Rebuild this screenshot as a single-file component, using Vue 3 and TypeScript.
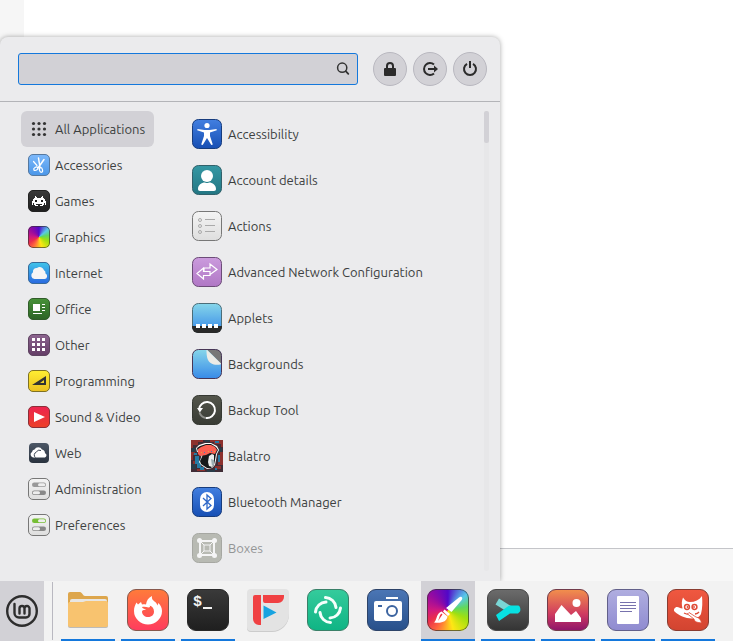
<script setup lang="ts">
import { ref } from 'vue'

interface Entry {
  label: string
  icon: string
  dim?: boolean
}

interface Task {
  label: string
  icon: string
  running: boolean
}

const categories: Entry[] = [
  { label: 'All Applications', icon: 'all' },
  { label: 'Accessories', icon: 'accessories' },
  { label: 'Games', icon: 'games' },
  { label: 'Graphics', icon: 'graphics' },
  { label: 'Internet', icon: 'internet' },
  { label: 'Office', icon: 'office' },
  { label: 'Other', icon: 'other' },
  { label: 'Programming', icon: 'programming' },
  { label: 'Sound & Video', icon: 'video' },
  { label: 'Web', icon: 'web' },
  { label: 'Administration', icon: 'administration' },
  { label: 'Preferences', icon: 'preferences' },
]

const apps: Entry[] = [
  { label: 'Accessibility', icon: 'accessibility' },
  { label: 'Account details', icon: 'account' },
  { label: 'Actions', icon: 'actions' },
  { label: 'Advanced Network Configuration', icon: 'network' },
  { label: 'Applets', icon: 'applets' },
  { label: 'Backgrounds', icon: 'backgrounds' },
  { label: 'Backup Tool', icon: 'backup' },
  { label: 'Balatro', icon: 'balatro' },
  { label: 'Bluetooth Manager', icon: 'bluetooth' },
  { label: 'Boxes', icon: 'boxes', dim: true },
]

const tasks: Task[] = [
  { label: 'Files', icon: 'files', running: true },
  { label: 'Firefox', icon: 'firefox', running: true },
  { label: 'Terminal', icon: 'terminal', running: true },
  { label: 'FreeTube', icon: 'freetube', running: false },
  { label: 'Element', icon: 'element', running: false },
  { label: 'Screenshot', icon: 'camera', running: false },
  { label: 'Drawing', icon: 'drawing', running: true },
  { label: 'Warp', icon: 'warp', running: true },
  { label: 'Image Viewer', icon: 'images', running: true },
  { label: 'Text Editor', icon: 'editor', running: true },
  { label: 'GIMP', icon: 'gimp', running: true },
]

const query = ref('')
const selected = ref('All Applications')
const activeTask = ref('drawing')
</script>

<template>
  <div class="desktop">
    <svg class="sprite" aria-hidden="true">
      <defs>
        <linearGradient id="g-sky" x2="0" y2="1"><stop stop-color="#7db9fb" /><stop offset="1" stop-color="#4a96e8" /></linearGradient>
        <linearGradient id="g-dark" x2="0" y2="1"><stop stop-color="#3a3a3a" /><stop offset="1" stop-color="#1f1f1f" /></linearGradient>
        <linearGradient id="g-net" x2="0" y2="1"><stop stop-color="#3fc4ea" /><stop offset="1" stop-color="#2a68e0" /></linearGradient>
        <linearGradient id="g-green" x2="0" y2="1"><stop stop-color="#479238" /><stop offset="1" stop-color="#2d6426" /></linearGradient>
        <linearGradient id="g-plum" x2="0" y2="1"><stop stop-color="#8d6590" /><stop offset="1" stop-color="#633d66" /></linearGradient>
        <linearGradient id="g-yellow" x2="0" y2="1"><stop stop-color="#ffee32" /><stop offset="1" stop-color="#ecc020" /></linearGradient>
        <linearGradient id="g-red" x2="0" y2="1"><stop stop-color="#ed2450" /><stop offset="1" stop-color="#ec4028" /></linearGradient>
        <linearGradient id="g-slate" x2="0" y2="1"><stop stop-color="#4c5766" /><stop offset="1" stop-color="#29323e" /></linearGradient>
        <linearGradient id="g-light" x2="0" y2="1"><stop stop-color="#f4f4f4" /><stop offset="1" stop-color="#dedede" /></linearGradient>
        <linearGradient id="g-blue" x2="0" y2="1"><stop stop-color="#427fe0" /><stop offset="1" stop-color="#174fb4" /></linearGradient>
        <linearGradient id="g-teal" x2="0" y2="1"><stop stop-color="#3598a4" /><stop offset="1" stop-color="#237683" /></linearGradient>
        <linearGradient id="g-lilac" x2="0" y2="1"><stop stop-color="#cb9bdd" /><stop offset="1" stop-color="#b077c5" /></linearGradient>
        <linearGradient id="g-aqua" x2="0" y2="1"><stop stop-color="#86d6ea" /><stop offset="1" stop-color="#388ae8" /></linearGradient>
        <linearGradient id="g-olive" x2="0" y2="1"><stop stop-color="#54564c" /><stop offset="1" stop-color="#383b34" /></linearGradient>
        <linearGradient id="g-fox" x2="0" y2="1"><stop stop-color="#ff7b3a" /><stop offset="1" stop-color="#ff3c5e" /></linearGradient>
        <linearGradient id="g-mint" x2="0" y2="1"><stop stop-color="#35cb9c" /><stop offset="1" stop-color="#0fb484" /></linearGradient>
        <linearGradient id="g-navy" x2="0" y2="1"><stop stop-color="#4b76b5" /><stop offset="1" stop-color="#28508a" /></linearGradient>
        <linearGradient id="g-grey" x2="0" y2="1"><stop stop-color="#6c6c6c" /><stop offset="1" stop-color="#343434" /></linearGradient>
        <linearGradient id="g-sunset" x2="0" y2="1"><stop stop-color="#f2904c" /><stop offset=".6" stop-color="#cf3a60" /><stop offset="1" stop-color="#8e146a" /></linearGradient>
        <linearGradient id="g-violet" x2="0" y2="1"><stop stop-color="#b0aee0" /><stop offset="1" stop-color="#8f8bd0" /></linearGradient>
        <linearGradient id="g-gimp" x2="0" y2="1"><stop stop-color="#f05840" /><stop offset="1" stop-color="#d24430" /></linearGradient>
      </defs>

      <symbol id="all" viewBox="0 0 22 22">
        <g fill="#333">
          <circle cx="5.500" cy="5.500" r="1.600" /><circle cx="11" cy="5.500" r="1.600" /><circle cx="16.500" cy="5.500" r="1.600" />
          <circle cx="5.500" cy="11" r="1.600" /><circle cx="11" cy="11" r="1.600" /><circle cx="16.500" cy="11" r="1.600" />
          <circle cx="5.500" cy="16.500" r="1.600" /><circle cx="11" cy="16.500" r="1.600" /><circle cx="16.500" cy="16.500" r="1.600" />
        </g>
      </symbol>
      <symbol id="accessories" viewBox="0 0 22 22">
        <rect x=".5" y=".5" width="21" height="21" rx="4.500" fill="url(#g-sky)" stroke="#55789f" />
        <g fill="none" stroke="#fff" stroke-linecap="round">
          <path stroke-width="1.500" d="M10.500 4 12 13.500M16 5.500 10 14" />
          <path stroke-width="1.200" d="M5.500 7.500 9 11.500" />
          <ellipse cx="7.800" cy="14.800" rx="2.200" ry="1.500" transform="rotate(-30 7.800 14.800)" stroke-width="1.200" />
          <ellipse cx="13" cy="16" rx="1.500" ry="2.300" transform="rotate(-15 13 16)" stroke-width="1.200" />
        </g>
      </symbol>
      <symbol id="games" viewBox="0 0 22 22">
        <rect x=".5" y=".5" width="21" height="21" rx="4.500" fill="url(#g-dark)" stroke="#222" />
        <path fill="#fff" shape-rendering="crispEdges" d="M7 6h1v1h1v1h4V7h1V6h1v2h1v1h1v2h1v4h-1v-2h-1v2h-1v1h-3v-1h2v-1H8v1h2v1H7v-1H6v-2H5v2H4v-4h1V9h1V8h1z" />
        <path fill="#222" shape-rendering="crispEdges" d="M7 10h2v2H7zM13 10h2v2h-2z" />
      </symbol>
      <symbol id="graphics" viewBox="0 0 22 22">
        <rect x=".5" y=".5" width="21" height="21" rx="4.500" fill="none" stroke="#333" stroke-opacity=".65" />
      </symbol>
      <symbol id="internet" viewBox="0 0 22 22">
        <rect x=".5" y=".5" width="21" height="21" rx="4.500" fill="url(#g-net)" stroke="#376a99" />
        <path fill="#f5f5f5" d="M6.500 17A3.700 3.700 0 0 1 5 10.200a3.600 3.600 0 0 1 4-4.200 4.400 4.400 0 0 1 7 2.300 3.200 3.200 0 0 1 1.500 3.200A2.900 2.900 0 0 1 16.500 17z" />
      </symbol>
      <symbol id="office" viewBox="0 0 22 22">
        <rect x=".5" y=".5" width="21" height="21" rx="4.500" fill="url(#g-green)" stroke="#315c2a" />
        <path fill="#fff" d="M5 6h7v7H5zM14 6h3v1h-3zM14 9h3v1h-3zM14 12h3v1h-3zM5 15h9v1H5z" />
      </symbol>
      <symbol id="other" viewBox="0 0 22 22">
        <rect x=".5" y=".5" width="21" height="21" rx="4.500" fill="url(#g-plum)" stroke="#5e4361" />
        <path fill="#fff" d="M4 4h3v3H4zM9 4h3v3H9zM14 4h3v3h-3zM4 9h3v3H4zM9 9h3v3H9zM14 9h3v3h-3zM4 14h3v3H4zM9 14h3v3H9zM14 14h3v3h-3z" />
      </symbol>
      <symbol id="programming" viewBox="0 0 22 22">
        <rect x=".5" y=".5" width="21" height="21" rx="4.500" fill="url(#g-yellow)" stroke="#7f7123" />
        <path fill="#333" fill-rule="evenodd" d="M4 15 18 6v9zm8-2h4v-3z" />
      </symbol>
      <symbol id="video" viewBox="0 0 22 22">
        <rect x=".5" y=".5" width="21" height="21" rx="4.500" fill="url(#g-red)" stroke="#8a3038" />
        <path fill="#fff" d="M6 6v10l11-5z" />
      </symbol>
      <symbol id="web" viewBox="0 0 22 22">
        <rect x="1" y="1" width="20" height="20" rx="4" fill="url(#g-slate)" />
        <path fill="#fff" d="M5 15.500a3 3 0 0 1-1-5.500 3.200 3.200 0 0 1 2.500-2.600A4.300 4.300 0 0 1 14 7.500a4 4 0 0 1 3 3.700 2.300 2.300 0 0 1 0 4.300z" />
        <path fill="none" stroke="#394451" d="M7.500 15.500a3 3 0 0 1 .8-5.300A3.500 3.500 0 0 1 13 8.500" />
      </symbol>
      <symbol id="administration" viewBox="0 0 22 22">
        <rect x=".5" y=".5" width="21" height="21" rx="4.500" fill="url(#g-light)" stroke="#777" />
        <rect x="4" y="4.500" width="14" height="4.500" rx="2.200" fill="#999" /><rect x="10" y="5.300" width="7.200" height="3" rx="1.500" fill="#eee" />
        <rect x="4" y="12.500" width="14" height="4.500" rx="2.200" fill="#888" /><rect x="4.800" y="13.300" width="7.200" height="3" rx="1.500" fill="#eee" />
      </symbol>
      <symbol id="preferences" viewBox="0 0 22 22">
        <rect x=".5" y=".5" width="21" height="21" rx="4.500" fill="url(#g-light)" stroke="#777" />
        <rect x="4" y="4.500" width="14" height="4.500" rx="2.200" fill="#76be35" /><rect x="10" y="5.300" width="7.200" height="3" rx="1.500" fill="#eee" />
        <rect x="4" y="12.500" width="14" height="4.500" rx="2.200" fill="#888" /><rect x="4.800" y="13.300" width="7.200" height="3" rx="1.500" fill="#eee" />
      </symbol>

      <symbol id="accessibility" viewBox="0 0 32 32">
        <rect x="1.500" y="1.500" width="29" height="29" rx="6" fill="url(#g-blue)" stroke="#173c7d" />
        <circle cx="16" cy="7.500" r="2.600" fill="#fff" />
        <path fill="#fff" d="m6.500 11 7 1h5l7-1 .3 1.300L19 14.500V18l2.800 8.500-1.500.5L16 20l-4.300 7-1.500-.5L13 18v-3.500l-6.800-2.200z" />
      </symbol>
      <symbol id="account" viewBox="0 0 32 32">
        <rect x="1.500" y="1.500" width="29" height="29" rx="6" fill="url(#g-teal)" stroke="#31616b" />
        <circle cx="16" cy="12" r="6" fill="#fff" />
        <path fill="#fff" d="M7 25c0-4 3.500-6.500 7-6.500 1.500.8 2.500.8 4 0 3.500 0 7 2.500 7 6.500 0 1.300-.7 2-2 2H9c-1.300 0-2-.7-2-2z" />
      </symbol>
      <symbol id="actions" viewBox="0 0 32 32">
        <rect x="1.500" y="1.500" width="29" height="29" rx="6" fill="url(#g-light)" stroke="#777" />
        <g fill="none" stroke="#aaa"><circle cx="9" cy="10" r="1.500" /><circle cx="9" cy="16" r="1.500" /><circle cx="9" cy="22" r="1.500" /><path d="M14 9.500h10M14 15.500h10M14 21.500h10" /></g>
      </symbol>
      <symbol id="network" viewBox="0 0 32 32">
        <rect x="1.500" y="1.500" width="29" height="29" rx="6" fill="url(#g-lilac)" stroke="#6c4c78" />
        <path fill="none" stroke="#fff" stroke-width="1.200" d="M13 12h6V8l7 5.500-7 5v-3h-6zM19 15.500v4h-6.500v3.500L6 17.500l6.500-5.500v3.500z" />
      </symbol>
      <symbol id="applets" viewBox="0 0 32 32">
        <rect x="1.500" y="1.500" width="29" height="29" rx="6" fill="url(#g-aqua)" stroke="#4b6d79" />
        <path fill="#292929" d="M1 24h30v1a6 6 0 0 1-6 6H7a6 6 0 0 1-6-6z" />
        <path fill="#fff" d="M5 22h4v4H5zM11 22h4v4h-4zM17 22h4v4h-4zM23 22h4v4h-4z" />
      </symbol>
      <symbol id="backgrounds" viewBox="0 0 32 32">
        <rect x="1.500" y="1.500" width="29" height="29" rx="6" fill="url(#g-aqua)" />
        <path fill="#777" d="M16 1.500h9a5.500 5.500 0 0 1 5.500 5.500v9z" />
        <path fill="#ecebe6" d="M15.500 1.500 30.500 16c-4 1.500-8 .8-10-.5-4.500-2-5-8-5-14z" />
        <rect x="1.500" y="1.500" width="29" height="29" rx="6" fill="none" stroke="#483656" />
      </symbol>
      <symbol id="backup" viewBox="0 0 32 32">
        <rect x="1.500" y="1.500" width="29" height="29" rx="6" fill="url(#g-olive)" stroke="#353832" />
        <path fill="none" stroke="#8d8e89" stroke-width="2" d="M8.500 18.500A8 8 0 0 0 15 24" />
        <path fill="none" stroke="#fff" stroke-width="2" d="M15 24a8 8 0 1 0-7-8.500" />
        <path fill="#fff" d="M6 14h6l-3.200 4.500z" />
      </symbol>
      <symbol id="balatro" viewBox="0 0 32 32">
        <path fill="#3f2c36" d="M0 0h32v32H0z" />
        <path fill="#8c302d" d="M0 0h12v2H7v3H2v3H0zM19 0h13v7h-2V4h-7V2h-4zM0 12h4v3H2v5H0zM29 12h3v13h-5v-3h2zM6 29h8v2H6zM24 26h6v3h-6zM2 21h3v3H2z" />
        <path fill="#283b48" d="M1 8h4v4H1zM27 8h4v4h-4zM14 0h5v2h-5zM0 24h5v5H0zM16 30h8v2h-8z" />
        <path fill="#247ba5" d="M4 16h4v5h2v6h3v3H9v-2H6v-4H4zM24 1h4v2h-4zM27 15h2v7h-2zM24 28h2v2h-2zM3 13h3v2H3z" />
        <path fill="#fff" d="m5 8 3-3 6-2h6l6 3 2 4-2 4-1 6-1 5-3 3-5 1-6-4-2-3 2-4 1-5-5-1z" />
        <path fill="#15191b" d="m6 8 3-2 6-2h5l5 3 2 3-2 4-1 6-1 5-3 3h-4l-6-4-1-3 2-4 1-4-5-1z" />
        <path fill="#fb5f52" d="m7 9 3-2 5-2h5l4 2 2 3-2 4-5-1-4 2-6 1-2-2z" />
        <path fill="#e9ecec" d="m18 16 3-2 2 1v9l-2 3-3-1-1-4z" />
        <path fill="#9badb2" d="m20 19 3 1v4l-2 2z" />
        <path fill="#e1a93a" d="M10 12h1v1h-1zM17 11h1v1h-1zM23 11h1v1h-1z" />
        <path fill="#3b83bd" d="M13 12h1v1h-1zM20 11h1v1h-1z" />
      </symbol>
      <symbol id="bluetooth" viewBox="0 0 32 32">
        <rect x="1.500" y="1.500" width="29" height="29" rx="6" fill="url(#g-blue)" stroke="#173c7d" />
        <rect x="9" y="6" width="14" height="20" rx="7" fill="#fff" />
        <path fill="none" stroke="#2e68c8" stroke-width="1.300" d="m12 12 8 7.500-4 3.500V9l4 3.500-8 7.500" />
      </symbol>
      <symbol id="boxes" viewBox="0 0 32 32">
        <rect x="1.500" y="1.500" width="29" height="29" rx="6" fill="#878b7a" stroke="#636659" />
        <g fill="none" stroke="#fff"><path stroke-width="2" d="M9 9h14v14H9z" /><path d="M13 13h6v6h-6zM9 9l4 4M23 9l-4 4M9 23l4-4M23 23l-4-4" /></g>
        <g fill="#fff"><circle cx="8.500" cy="8.500" r="2.500" /><circle cx="23.500" cy="8.500" r="2.500" /><circle cx="8.500" cy="23.500" r="2.500" /><circle cx="23.500" cy="23.500" r="2.500" /></g>
      </symbol>

      <symbol id="files" viewBox="0 0 44 44">
        <path fill="#dda64c" d="M2 6a2 2 0 0 1 2-2h10c2 0 3 4 5 4h21a2 2 0 0 1 2 2v10H2z" />
        <path fill="#e8e6e3" d="M6 11h33a2 2 0 0 1 2 2v4H4v-4a2 2 0 0 1 2-2z" />
        <path fill="#bdbbb8" d="M2 37h40v1a2 2 0 0 1-2 2H4a2 2 0 0 1-2-2z" />
        <path fill="#f8c36f" d="M2 16c0-1.500 1-2 2-2h13l3-1h20c1 0 2 .7 2 2v22a2 2 0 0 1-2 2H4a2 2 0 0 1-2-2z" />
      </symbol>
      <symbol id="firefox" viewBox="0 0 44 44">
        <rect x="1.500" y="1.500" width="41" height="41" rx="8.500" fill="url(#g-fox)" stroke="#87584c" />
        <path fill="#fff" fill-rule="evenodd" d="M26 8c-.5 2.500.5 4 2.500 5.500 1.500 1 2.500 2.500 3 4l.8-2.500c2.500 2 3.700 5 3.700 8a14 13.500 0 0 1-28 0c0-3.500 1-6 2.500-8.500l1.500 2 3-2.500 1 2.500c1.500-.5 2.700-.4 4 0 .5-4 2.500-7 6-8.500zM16 19c.5 1.500 2 2 4 2-1.500 1.500-3.500.5-4 2.500 0 3.500 3 5.500 6 5.500 4 0 6-2.500 6-5.500s-2-5.500-4.500-6c1 1 .5 2-1 2-2-.5-4-1-6.500-.5z" />
      </symbol>
      <symbol id="terminal" viewBox="0 0 44 44">
        <rect x="1.500" y="1.500" width="41" height="41" rx="8.500" fill="url(#g-dark)" stroke="#292929" />
        <path fill="#f2f2f2" d="M17 19h9v2h-9z" />
      </symbol>
      <symbol id="freetube" viewBox="0 0 44 44">
        <path fill="#ccc" d="M1 9a8 8 0 0 1 8-7h26a8 8 0 0 1 8 8v17a17 17 0 0 1-17 17H5a4 4 0 0 1-4-4z" />
        <path fill="#e3e3e3" d="M1 5a4 4 0 0 1 4-4h34a4 4 0 0 1 4 4v21a17 17 0 0 1-17 17H5a4 4 0 0 1-4-4z" />
        <path fill="#f04143" d="M7 9a2 2 0 0 1 2-2h6v30h-2a6 6 0 0 1-6-6zM17 7h21v2a6 6 0 0 1-6 6H19a2 2 0 0 1-2-2z" />
        <path fill="#18a3e0" d="m17.500 17.500 13 7-13 6.500z" />
      </symbol>
      <symbol id="element" viewBox="0 0 44 44">
        <rect x="1.500" y="1.500" width="41" height="41" rx="8.500" fill="url(#g-mint)" stroke="#3a8068" />
        <g fill="none" stroke="#f5fffc" stroke-width="3" stroke-linecap="round"><path d="M19.500 9.500a11 11 0 0 1 10.500 10" /><path d="M34.500 20a11 11 0 0 1-10.500 10" /><path d="M24.500 34.500a11 11 0 0 1-10.500-10" /><path d="M9.500 24a11 11 0 0 1 10.500-10" /></g>
      </symbol>
      <symbol id="camera" viewBox="0 0 44 44">
        <rect x="1.500" y="1.500" width="41" height="41" rx="8.500" fill="url(#g-navy)" stroke="#2d4368" />
        <path fill="#fff" d="M20 9h12v2H20zM10 13h24a2 2 0 0 1 2 2v16a2 2 0 0 1-2 2H10a2 2 0 0 1-2-2V15a2 2 0 0 1 2-2z" />
        <circle cx="26" cy="23" r="5" fill="none" stroke="#3c64a0" stroke-width="2" />
        <path fill="#3c64a0" d="M12 17h4v2h-4z" />
      </symbol>
      <symbol id="drawing" viewBox="0 0 44 44">
        <rect x="1.500" y="1.500" width="41" height="41" rx="8.500" fill="none" stroke="#333" stroke-opacity=".7" />
        <path fill="#fff" d="M35.500 9c1 .7 1 1.500.2 3L25.500 24 20 20 33 9.500c1-.8 1.700-1 2.500-.5zM18.500 21.500l5.500 4.500-2 2-5-4.500z" />
        <path fill="#fff" fill-rule="evenodd" d="m15.500 23.500 6 5c-1 5-5 7-13.500 6 3-2 2-9 7.500-11zm0 2c-2.500 2-2 4.500-3.500 7.500l4.500-6.500z" />
      </symbol>
      <symbol id="warp" viewBox="0 0 44 44">
        <rect x="1.500" y="1.500" width="41" height="41" rx="8.500" fill="url(#g-grey)" stroke="#484848" />
        <path fill="#7ad6d5" d="m13 10.500 12 7.500-5 5-10.500-6.500z" />
        <path fill="#08e1e2" d="M10 27l11-8c1.500-1 2.500-1.500 4.500-1.500H32c2 0 3 4 2 6l-2 2h-8l-11 7.500z" />
      </symbol>
      <symbol id="images" viewBox="0 0 44 44">
        <rect x="1.500" y="1.500" width="41" height="41" rx="8.500" fill="url(#g-sunset)" stroke="#713b4a" />
        <circle cx="30.500" cy="15" r="4" fill="#fff" />
        <path fill="#fff" d="M9 34V26l6.500-9L25 27l5-4 5 7v4z" />
      </symbol>
      <symbol id="editor" viewBox="0 0 44 44">
        <rect x="1.500" y="1.500" width="41" height="41" rx="8.500" fill="url(#g-violet)" stroke="#62608a" />
        <path fill="#fff" d="M12 8h20a1 1 0 0 1 1 1v26a1 1 0 0 1-1 1H12a1 1 0 0 1-1-1V9a1 1 0 0 1 1-1z" />
        <path fill="#7772ad" d="M14 14h16v1H14zM14 17h16v1H14zM14 20h16v1H14zM14 23h12v1H14z" />
      </symbol>
      <symbol id="gimp" viewBox="0 0 44 44">
        <rect x="1.500" y="1.500" width="41" height="41" rx="8.500" fill="url(#g-gimp)" stroke="#8a3c30" />
        <path fill="#fff" d="M17 9.500c2 3 4 4.500 7 4.500 5 0 9-2 12-6 .5 6 .5 12-1 18-2 3.500-5 4.500-9 4.500-7 0-13-3-17.500-7-1.500-2 .5-4.500 2.500-4.500 2 0 3 1.500 5.500 1.500-1-4-1-7.500.5-11z" />
        <g fill="#fff" stroke="#df4b36" stroke-width="1.500"><circle cx="21" cy="19" r="2.400" /><circle cx="28.500" cy="19" r="2.400" /></g>
        <g fill="#df4b36"><circle cx="21.500" cy="19" r=".9" /><circle cx="28" cy="19" r=".9" /></g>
        <path fill="none" stroke="#df4b36" stroke-width="1.300" d="M18 25c3 1.500 5 1.500 7 1M29 26c2-.3 3-.8 4-2" />
        <path fill="#fff" stroke="#df4b36" stroke-width=".8" d="m23 24.500 7 4.500c3 .5 5 2.500 5.500 6-4-.5-7-1-7.500-4l-6.500-5z" />
      </symbol>
    </svg>

    <main class="workspace">
      <div class="document"><div class="gutter"></div></div>
      <div class="statusbar"></div>

      <section class="menu" aria-label="Application menu">
        <header class="menu-header">
          <div class="search">
            <input v-model="query" type="text" aria-label="Search" />
            <svg class="search-icon" viewBox="0 0 16 16" aria-hidden="true">
              <circle cx="7.200" cy="6.700" r="4.600" fill="none" stroke="#333" stroke-width="1.500" />
              <path d="m10.700 10.200 2.600 2.600" stroke="#333" stroke-width="1.800" stroke-linecap="round" />
            </svg>
          </div>
          <div class="session">
            <button type="button" aria-label="Lock screen">
              <svg viewBox="0 0 16 16"><path fill="#2b2b2b" fill-rule="evenodd" d="M4 7V5a4 4 0 0 1 8 0v2h1a1 1 0 0 1 1 1v6a1 1 0 0 1-1 1H3a1 1 0 0 1-1-1V8a1 1 0 0 1 1-1zm2 0h4V5a2 2 0 0 0-4 0z" /></svg>
            </button>
            <button type="button" aria-label="Log out">
              <svg viewBox="0 0 16 16"><path fill="none" stroke="#2b2b2b" stroke-width="2" d="M12 3.500A6 6 0 1 0 12 12.500M6 8h6" /><path fill="#2b2b2b" d="M12 4.500 16 8l-4 3.500z" /></svg>
            </button>
            <button type="button" aria-label="Shut down">
              <svg viewBox="0 0 16 16"><path fill="none" stroke="#2b2b2b" stroke-width="2" d="M5 2.800a6 6 0 1 0 6 0M8 0v7" /></svg>
            </button>
          </div>
        </header>

        <div class="menu-body">
          <nav class="categories" aria-label="Categories">
            <button
              v-for="item in categories"
              :key="item.icon"
              type="button"
              class="category"
              :class="{ selected: selected === item.label }"
              @click="selected = item.label"
            >
              <svg class="category-icon" :class="{ spectrum: item.icon === 'graphics' }" aria-hidden="true"><use :href="'#' + item.icon" /></svg>
              <span>{{ item.label }}</span>
            </button>
          </nav>

          <div class="apps">
            <button v-for="item in apps" :key="item.icon" type="button" class="app" :class="{ dim: item.dim }">
              <svg class="app-icon" aria-hidden="true"><use :href="'#' + item.icon" /></svg>
              <span>{{ item.label }}</span>
            </button>
          </div>

          <div class="scroll-track"><div class="scroll-thumb"></div></div>
        </div>
      </section>
    </main>

    <footer class="panel">
      <button type="button" class="launcher" aria-label="Menu">
        <svg viewBox="0 0 32 32" aria-hidden="true">
          <circle cx="16" cy="16" r="14.800" fill="none" stroke="#2d2d2d" stroke-width="2.400" />
          <path fill="none" stroke="#2d2d2d" stroke-width="2.400" stroke-linecap="round" d="M8.500 9v9a4.500 4.500 0 0 0 4.500 4.500h7a3.500 3.500 0 0 0 3.500-3.500v-5.500a2.500 2.500 0 0 0-5 0v5M18.500 13.500a2.500 2.500 0 0 0-5 0v5" />
        </svg>
      </button>
      <div class="divider"></div>
      <nav class="tasks" aria-label="Window list">
        <button
          v-for="task in tasks"
          :key="task.icon"
          type="button"
          class="task"
          :class="{ running: task.running, active: activeTask === task.icon }"
          :aria-label="task.label"
          @click="activeTask = task.icon"
        >
          <svg class="task-icon" :class="{ spectrum: task.icon === 'drawing' }" viewBox="0 0 44 44" aria-hidden="true">
            <use :href="'#' + task.icon" />
            <text v-if="task.icon === 'terminal'" class="prompt" x="7" y="18">$</text>
          </svg>
        </button>
      </nav>
    </footer>
  </div>
</template>

<style>
body {
  margin: 0;
}
</style>

<style scoped>
.desktop {
  display: flex;
  flex-direction: column;
  min-height: 100vh;
  background: #fff;
  color: #3c3f3f;
  font-family: Ubuntu, 'Noto Sans', 'Open Sans', sans-serif;
  font-size: 13px;
  line-height: 18px;
}

button {
  box-sizing: border-box;
  margin: 0;
  padding: 0;
  border: 0;
  background: none;
  color: inherit;
  font: inherit;
  text-align: left;
}

.sprite {
  position: absolute;
  width: 0;
  height: 0;
}

.prompt {
  fill: #f2f2f2;
  font: bold 15px 'Liberation Mono', monospace;
}

.workspace {
  position: relative;
  display: flex;
  flex: 1;
  flex-direction: column;
  min-height: 581px;
  overflow: hidden;
}

.document {
  display: flex;
  flex: 1;
}

.gutter {
  width: 24px;
  background: #f6f6f6;
}

.statusbar {
  height: 32px;
  border-top: 1px solid #c4c5c9;
  background: #f7f7f7;
}

.menu {
  position: absolute;
  bottom: 0;
  left: 0;
  box-sizing: border-box;
  width: 100%;
  max-width: 500px;
  border-radius: 8px 8px 0 0;
  background: #ebebed;
  box-shadow: 0 0 5px rgba(0, 0, 0, 0.35);
}

.menu-header {
  display: flex;
  align-items: center;
  gap: 15px;
  padding: 15px 13px 15px 18px;
  border-bottom: 1px solid #b3b4b8;
}

.search {
  position: relative;
  flex: 1;
}

.search input {
  display: block;
  box-sizing: border-box;
  width: 100%;
  height: 32px;
  padding: 0 32px 0 8px;
  border: 1px solid #1478dc;
  border-radius: 3px;
  outline: 0;
  background: #d2d1d6;
  color: inherit;
  font: inherit;
}

.search-icon {
  position: absolute;
  top: 8px;
  right: 7px;
  width: 16px;
  height: 16px;
}

.session {
  display: flex;
  gap: 6px;
}

.session button {
  display: grid;
  place-items: center;
  width: 34px;
  height: 34px;
  border: 1px solid #b9b8c0;
  border-radius: 50%;
  background: #d2d1d6;
}

.session svg {
  width: 16px;
  height: 16px;
}

.menu-body {
  display: flex;
  align-items: stretch;
  padding: 9px 11px 10px 21px;
}

.categories {
  display: flex;
  flex: none;
  flex-direction: column;
  width: 133px;
}

.category {
  display: flex;
  align-items: center;
  gap: 5px;
  height: 36px;
  padding: 0 7px;
  border-radius: 6px;
  white-space: nowrap;
}

.category.selected {
  background: #d2d1d6;
}

.category-icon {
  flex: none;
  width: 22px;
  height: 22px;
}

.apps {
  display: flex;
  flex: 1;
  flex-direction: column;
  margin-left: 31px;
}

.app {
  display: flex;
  align-items: center;
  gap: 5px;
  height: 46px;
  padding: 0 6px;
  white-space: nowrap;
}

.app.dim {
  opacity: 0.5;
}

.app-icon {
  flex: none;
  width: 32px;
  height: 32px;
}

.scroll-track {
  width: 5px;
  border-radius: 3px;
  background: #e7e7e9;
}

.scroll-thumb {
  height: 32px;
  border-radius: 2px;
  background: #d2d1d6;
}

.spectrum {
  background: conic-gradient(
    #5108c8,
    #58c8ea 50deg,
    #60d860 80deg,
    #a0e010 115deg,
    #ffe714 165deg,
    #ff6a3c 210deg,
    #ea2c4c 240deg,
    #d01880 270deg,
    #900aa4 315deg,
    #5108c8
  );
}

.category-icon.spectrum {
  clip-path: inset(0 round 5px);
}

.task-icon.spectrum {
  clip-path: inset(1px round 9px);
}

.panel {
  display: flex;
  height: 60px;
  background: #f2f2f2;
}

.launcher {
  display: grid;
  flex: none;
  place-items: center;
  width: 44px;
  background: #d2d1d6;
}

.launcher svg {
  width: 32px;
  height: 32px;
}

.divider {
  flex: none;
  width: 1px;
  margin: 1px 8px;
  background: #b9b8c0;
}

.tasks {
  display: flex;
  gap: 6px;
}

.task {
  display: flex;
  align-items: center;
  justify-content: center;
  width: 54px;
  border-bottom: 2px solid transparent;
}

.task.running {
  border-bottom-color: #1478dc;
}

.task.active {
  background-color: #d2d1d6;
}

.task-icon {
  width: 44px;
  height: 44px;
}
</style>
